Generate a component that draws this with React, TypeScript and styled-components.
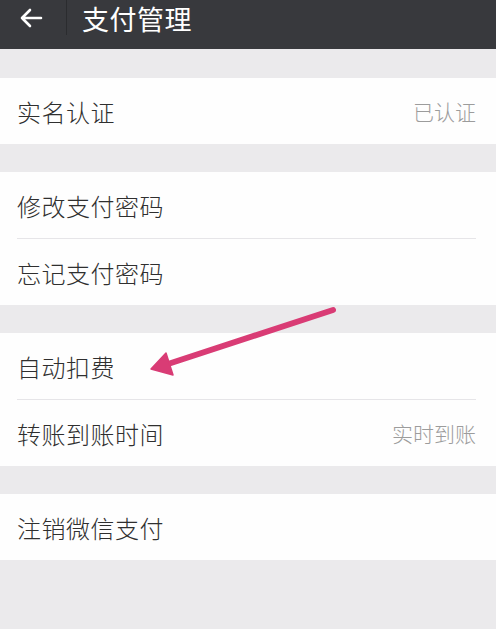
import { FC } from 'react';
import styled, { createGlobalStyle } from 'styled-components';

const GlobalStyle = createGlobalStyle`
  html, body {
    margin: 0;
    padding: 0;
    background: #ebeaec;
  }
  body {
    font-family: "Noto Sans CJK SC", "Noto Sans", sans-serif;
  }
`;

type Row = {
  label: string;
  value?: string;
};

const sections: Row[][] = [
  [{ label: '实名认证', value: '已认证' }],
  [{ label: '修改支付密码' }, { label: '忘记支付密码' }],
  [{ label: '自动扣费' }, { label: '转账到账时间', value: '实时到账' }],
  [{ label: '注销微信支付' }],
];

const App: FC = () => {
  return (
    <>
      <GlobalStyle />
      <SPage>
        <SHeader>
          <SBack>
            <svg width="24" height="20" viewBox="0 0 24 20" fill="none">
              <path
                d="M22 10H3M11 2L3 10l8 8"
                stroke="#fff"
                strokeWidth="2.6"
                strokeLinecap="round"
                strokeLinejoin="round"
              />
            </svg>
          </SBack>
          <SDivider />
          <STitle>支付管理</STitle>
        </SHeader>
        <SList>
          {sections.map((rows, i) => (
            <SSection key={i}>
              {rows.map((row) => (
                <SRow key={row.label}>
                  <SLabel>{row.label}</SLabel>
                  {row.value && <SValue>{row.value}</SValue>}
                </SRow>
              ))}
            </SSection>
          ))}
        </SList>
        <SPointer width="200" height="80" viewBox="0 0 200 80">
          <line x1="185" y1="12" x2="20" y2="66" stroke="#d93c75" strokeWidth="6" strokeLinecap="round" />
          <polygon points="3,71 18,55 25,77" fill="#d93c75" stroke="#d93c75" strokeWidth="1.5" strokeLinejoin="round" />
        </SPointer>
      </SPage>
    </>
  );
};

export default App;

const SPage = styled.div`
  position: relative;
  width: 496px;
  min-height: 629px;
  background: #ebeaec;
  overflow: hidden;
`;

const SHeader = styled.div`
  display: flex;
  align-items: flex-start;
  height: 49px;
  background: #38393d;
`;

const SBack = styled.div`
  display: flex;
  align-items: center;
  justify-content: center;
  width: 62px;
  height: 35px;
  padding-right: 4px;
`;

const SDivider = styled.div`
  width: 1px;
  height: 35px;
  background: #2b2c2f;
`;

const STitle = styled.div`
  margin-left: 15px;
  color: #ffffff;
  font-size: 27px;
  line-height: 37px;
  letter-spacing: 0.5px;
`;

const SList = styled.div`
  display: flex;
  flex-direction: column;
  gap: 28px;
  padding-top: 29px;
`;

const SSection = styled.div`
  background: #fefefe;
  padding: 0 20px 0 17px;
`;

const SRow = styled.div`
  display: flex;
  align-items: center;
  justify-content: space-between;
  height: 66px;

  & + & {
    border-top: 1px solid #e6e5e8;
  }
`;

const SLabel = styled.span`
  color: #2f2f2f;
  font-size: 24px;
  font-weight: 300;
  letter-spacing: 0.5px;
`;

const SValue = styled.span`
  color: #9c9c9c;
  font-size: 21px;
  font-weight: 300;
`;

const SPointer = styled.svg`
  position: absolute;
  left: 148px;
  top: 298px;
`;
